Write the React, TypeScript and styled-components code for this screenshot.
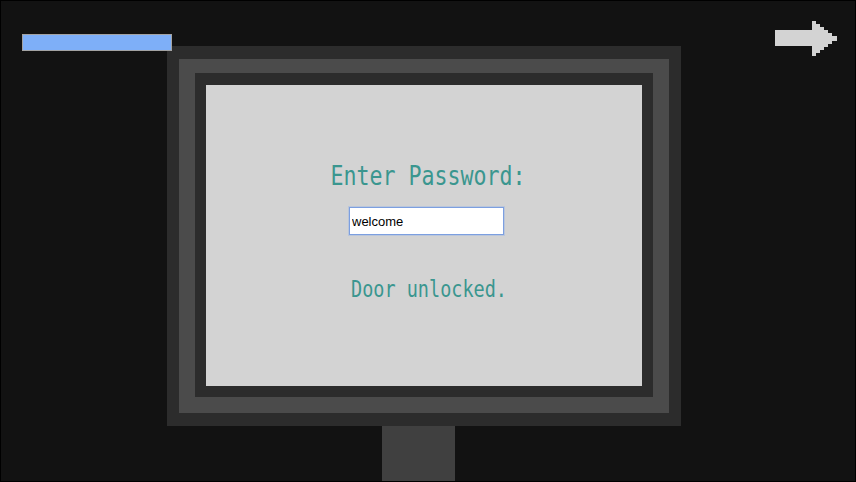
import React from "react";
import styled, { createGlobalStyle } from "styled-components";

const Global = createGlobalStyle`
  html, body { margin: 0; padding: 0; background: #000; }
  * { box-sizing: border-box; }
`;

const Stage = styled.div`
  position: relative;
  width: 856px;
  height: 482px;
  border: 1px solid #000;
  background: #121212;
  overflow: hidden;
  display: flex;
  flex-direction: column;
`;

const ProgressBar = styled.div`
  position: absolute;
  left: 21px;
  top: 33px;
  width: 150px;
  height: 17px;
  background: #7eaff8;
  border: 1px solid #a3a3a3;
  z-index: 2;
`;

const NextArrow = styled.svg`
  position: absolute;
  left: 773px;
  top: 19px;
  z-index: 2;
`;

const Monitor = styled.div`
  margin: 45px 0 0 166px;
  width: 514px;
  height: 380px;
  background: #2c2c2c;
  padding: 13px 12px 13px 12px;
`;

const Bezel = styled.div`
  width: 100%;
  height: 100%;
  background: #4b4b4b;
  padding: 14px 16px 16px 16px;
`;

const InnerFrame = styled.div`
  width: 100%;
  height: 100%;
  background: #2c2c2c;
  padding: 12px 11px 11px 11px;
`;

const Screen = styled.div`
  width: 100%;
  height: 100%;
  background: #d3d3d3;
  display: flex;
  flex-direction: column;
  align-items: center;
  padding-left: 6px;
`;

const TermText = styled.div<{ $size: number; $line: number; $top: number; $shift: number }>`
  font-family: "DejaVu Sans Mono", "Liberation Mono", monospace;
  font-size: ${(p) => p.$size}px;
  line-height: ${(p) => p.$line}px;
  height: ${(p) => p.$line}px;
  margin-top: ${(p) => p.$top}px;
  margin-left: ${(p) => p.$shift}px;
  color: #3a968f;
  white-space: pre;
  transform: scaleY(1.2);
  transform-origin: 50% 80%;
`;

const PasswordInput = styled.input`
  margin-top: 17px;
  width: 155px;
  height: 28px;
  padding: 0 2px;
  border: 1px solid #7c9fe0;
  box-shadow: 0 0 0 1px rgba(140, 175, 235, 0.35);
  outline: none;
  background: #fff;
  font-family: "Liberation Sans", Arial, sans-serif;
  font-size: 13px;
  color: #000;
  margin-left: -1px;
`;

const Stand = styled.div`
  margin-left: 381px;
  width: 73px;
  flex: 1;
  background: #404040;
`;

export default function App() {
  return (
    <>
      <Global />
      <Stage>
        <ProgressBar />
        <NextArrow width="64" height="36" viewBox="0 0 64 36" aria-label="next">
          <path
            fill="#d3d3d3"
            d="M1 10 H38 V1 H42 V4 H46 V7 H50 V10 H54 V13 H58 V16 H63 V21 H58 V24 H54 V27 H50 V30 H46 V33 H42 V36 H38 V26 H1 Z"
          />
        </NextArrow>
        <Monitor>
          <Bezel>
            <InnerFrame>
              <Screen>
                <TermText $size={21.6} $line={24} $top={81} $shift={2}>
                  Enter Password:
                </TermText>
                <PasswordInput type="text" defaultValue="welcome" />
                <TermText $size={18.5} $line={22} $top={45} $shift={4}>
                  Door unlocked.
                </TermText>
              </Screen>
            </InnerFrame>
          </Bezel>
        </Monitor>
        <Stand />
      </Stage>
    </>
  );
}
